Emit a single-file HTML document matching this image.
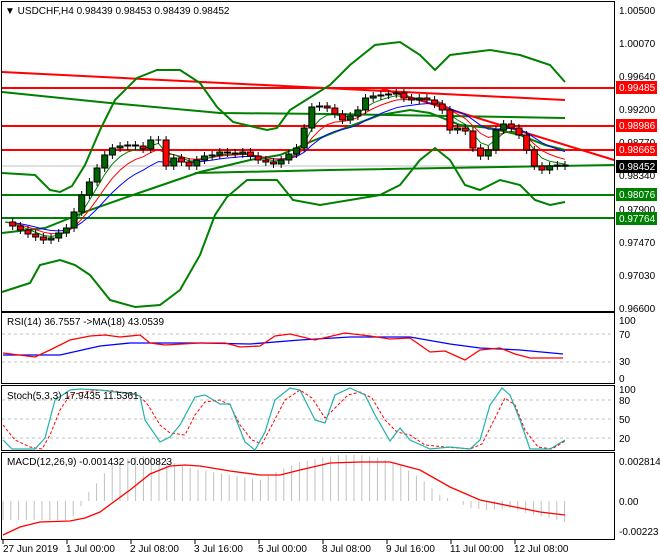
<!DOCTYPE html>
<html><head><meta charset="utf-8"><style>
html,body{margin:0;padding:0;background:#fff;width:660px;height:560px;overflow:hidden}
svg{display:block;font-family:"Liberation Sans",sans-serif;font-size:10px}
</style></head><body>
<svg id="s" width="660" height="560" xmlns="http://www.w3.org/2000/svg">
<rect width="660" height="560" fill="#fff"/>
<rect x="1.5" y="1.5" width="613" height="310" fill="none" stroke="#000"/>
<rect x="1.5" y="312.5" width="613" height="71" fill="none" stroke="#000"/>
<rect x="1.5" y="385.5" width="613" height="65" fill="none" stroke="#000"/>
<rect x="1.5" y="452.5" width="613" height="87" fill="none" stroke="#000"/>
<g id="main"></g>
<g fill="#000">
<text x="619" y="14">1.00500</text><text x="619" y="47">1.00070</text><text x="619" y="80">0.99640</text>
<text x="619" y="113">0.99200</text><text x="619" y="146">0.98770</text><text x="619" y="179">0.98340</text>
<text x="619" y="213">0.97900</text><text x="619" y="246">0.97470</text><text x="619" y="279">0.97030</text>
<text x="619" y="312">0.96600</text>
</g>
<g>
<rect x="616" y="81" width="41" height="13" fill="#f00"/><text x="619" y="91" fill="#fff">0.99485</text>
<rect x="616" y="119" width="41" height="13" fill="#f00"/><text x="619" y="129" fill="#fff">0.98986</text>
<rect x="616" y="143" width="41" height="13" fill="#f00"/><text x="619" y="153" fill="#fff">0.98665</text>
<rect x="616" y="160" width="41" height="13" fill="#000"/><text x="619" y="170" fill="#fff">0.98452</text>
<rect x="616" y="188" width="41" height="13" fill="#008000"/><text x="619" y="198" fill="#fff">0.98076</text>
<rect x="616" y="212" width="41" height="13" fill="#008000"/><text x="619" y="222" fill="#fff">0.97764</text>
</g>
<text x="5" y="14" fill="#000">▼ USDCHF,H4  0.98439 0.98453 0.98439 0.98452</text>
<g stroke="#c0c0c0" stroke-dasharray="3,3"><line x1="2" y1="334" x2="614" y2="334"/><line x1="2" y1="362" x2="614" y2="362"/>
<line x1="2" y1="400" x2="614" y2="400"/><line x1="2" y1="419" x2="614" y2="419"/><line x1="2" y1="438" x2="614" y2="438"/></g>
<polyline fill="none" stroke="#00f" stroke-width="1.3" points="3,355 60,355 100,346 130,343 200,343 250,344 300,340 350,337 410,337 450,344 480,348 520,350 563,354"/>
<polyline fill="none" stroke="#f00" stroke-width="1.3" points="3,353 35,357 50,350 70,340 90,336 105,335 120,337 140,335 150,343 165,345 200,343 225,343 240,347 260,346 275,336 290,334 315,340 345,333 370,336 390,339 410,338 430,352 445,351 465,360 480,350 500,348 515,354 530,358 563,358"/>
<text x="7" y="325">RSI(14) 36.7557  -&gt;MA(18) 43.0539</text>
<text x="619" y="324">100</text><text x="619" y="338">70</text><text x="619" y="365">30</text><text x="619" y="382">0</text>
<polyline fill="none" stroke="#f00" stroke-dasharray="3,2" points="3,425 15,440 30,447 42,449 50,435 60,410 70,395 85,392 100,390 115,391 130,394 140,396 148,405 160,425 170,433 185,435 195,415 205,402 220,400 230,405 240,425 252,440 262,444 272,425 285,400 300,390 312,398 325,418 335,408 348,395 360,392 372,398 385,420 397,432 410,435 425,445 445,447 470,449 482,444 494,420 505,398 515,405 525,430 538,447 552,449 565,441"/>
<polyline fill="none" stroke="#20b2aa" stroke-width="1.2" points="3,440 12,449 35,449 45,438 55,400 70,390 80,389 100,390 115,392 130,393 140,396 145,420 160,442 170,437 180,425 195,397 205,395 220,404 230,404 245,442 255,450 265,432 275,400 290,388 300,390 315,420 325,423 335,395 350,388 365,395 375,415 390,441 400,428 410,440 430,449 450,447 470,449 480,440 490,405 502,388 510,395 520,420 530,449 550,449 565,440"/>
<text x="7" y="399">Stoch(5,3,3) 17.9435 11.5361</text>
<text x="619" y="393">100</text><text x="619" y="404">80</text><text x="619" y="423">50</text><text x="619" y="442">20</text>
<g id="hist" stroke="#c0c0c0" stroke-width="1"></g>
<polyline fill="none" stroke="#f00" stroke-width="1.3" points="3,535 20,527 40,522 70,521 85,518 100,512 130,490 150,474 170,466 185,465 200,466 230,471 260,475 280,475 300,470 330,463 360,462 390,462 420,470 450,487 480,500 510,506 540,512 565,515"/>
<text x="7" y="465">MACD(12,26,9) -0.001432 -0.000823</text>
<text x="619" y="465">0.002814</text><text x="619" y="505">0.00</text><text x="619" y="535">-0.00223</text>
<g fill="#000">
<text x="3" y="552">27 Jun 2019</text><text x="66" y="552">1 Jul 00:00</text><text x="130" y="552">2 Jul 08:00</text>
<text x="194" y="552">3 Jul 16:00</text><text x="258" y="552">5 Jul 00:00</text><text x="322" y="552">8 Jul 08:00</text>
<text x="386" y="552">9 Jul 16:00</text><text x="450" y="552">11 Jul 00:00</text><text x="514" y="552">12 Jul 08:00</text>
</g>
<g stroke="#000"><line x1="3" y1="540" x2="3" y2="544"/><line x1="67" y1="540" x2="67" y2="544"/><line x1="131" y1="540" x2="131" y2="544"/><line x1="195" y1="540" x2="195" y2="544"/><line x1="259" y1="540" x2="259" y2="544"/><line x1="323" y1="540" x2="323" y2="544"/><line x1="387" y1="540" x2="387" y2="544"/><line x1="451" y1="540" x2="451" y2="544"/><line x1="515" y1="540" x2="515" y2="544"/></g>
</svg>
<script>
var NS="http://www.w3.org/2000/svg";
function el(p,t,a){var e=document.createElementNS(NS,t);for(var k in a)e.setAttribute(k,a[k]);p.appendChild(e);return e;}
var m=document.getElementById('main');
function pl(pts,c,w){el(m,'polyline',{points:pts,fill:'none',stroke:c,'stroke-width':w});}
el(m,'line',{x1:2,y1:166,x2:614,y2:166,stroke:'#c0c0c0'});
pl("2,72 565,100","#f00",2);
pl("2,92 110,103 220,113 330,114 450,116 565,118","#008000",2);
pl("195,173 330,170 614,165","#008000",2);
pl("380,88 614,160","#f00",2);
[[88,'#f00'],[126,'#f00'],[150,'#f00'],[195,'#008000'],[218,'#008000']].forEach(function(l){el(m,'line',{x1:2,y1:l[0],x2:614,y2:l[0],stroke:l[1],'stroke-width':2});});
pl("2,173 35,175 50,190 60,192 72,186 85,165 100,130 115,100 137,78 157,70 180,70 200,83 217,107 233,122 267,130 277,128 290,110 330,85 350,65 375,45 400,42 420,55 435,70 450,55 490,50 520,55 550,65 565,82","#008000",2);
pl("2,292 30,283 40,265 60,260 75,265 90,275 110,300 135,307 160,305 180,290 200,255 215,215 227,197 247,180 277,180 293,200 320,205 350,200 380,195 400,185 420,160 435,148 450,160 465,185 480,190 500,180 520,185 535,200 550,205 565,202","#008000",2);
pl("2,233 45,228 90,210 130,196 200,172 250,160 280,155 310,142 340,130 380,115 410,110 430,113 460,125 490,128 520,135 545,145 565,150","#008000",2);
var C=[222,226,230,234,237,240,238,233,228,212,195,182,168,155,148,146,145,146,149,140,140,166,158,162,166,160,156,155,152,153,154,152,156,160,162,164,160,154,148,128,107,106,108,114,120,116,110,98,96,95,94,93,98,100,98,100,104,110,130,128,131,148,156,150,130,124,128,135,150,166,170,166,165,166];
var n=C.length,dx=(565-5)/(n-1);
function ema(p){var k=2/(p+1),o=[],v=C[0];for(var i=0;i<n;i++){v=v+(C[i]-v)*k;o.push((5+i*dx).toFixed(1)+","+v.toFixed(1));}return o.join(" ");}
pl(ema(12),"#00f",1);pl(ema(7),"#f00",1);pl(ema(4),"#008000",1);
for(var i=1;i<n;i++){var o=C[i-1],c=C[i],x=5+i*dx,t=Math.min(o,c),b=Math.max(o,c);
el(m,'line',{x1:x,y1:t-4,x2:x,y2:b+4,stroke:'#000'});
if(b-t<1){el(m,'line',{x1:x-3,y1:t,x2:x+3,y2:t,stroke:'#000'});}
else el(m,'rect',{x:x-3,y:t,width:6,height:b-t,fill:c<o?'#006400':'#f00',stroke:'#000','stroke-width':1});}
var H=[[3,520],[70,520],[80,508],[90,490],[100,480],[110,465],[120,460],[140,456],[160,458],[180,465],[200,470],[230,475],[260,480],[280,470],[300,462],[320,458],[340,455],[360,455],[380,458],[400,465],[420,478],[440,495],[455,501],[470,508],[490,510],[510,508],[530,514],[550,518],[565,522]];
var h=document.getElementById('hist');
for(var x=3;x<=565;x+=7.8){var j=0;while(j<H.length-2&&H[j+1][0]<x)j++;var a=H[j],bb=H[j+1],y=a[1]+(bb[1]-a[1])*(x-a[0])/(bb[0]-a[0]);
el(h,'line',{x1:x,y1:501,x2:x,y2:y});}
</script>
</body></html>
